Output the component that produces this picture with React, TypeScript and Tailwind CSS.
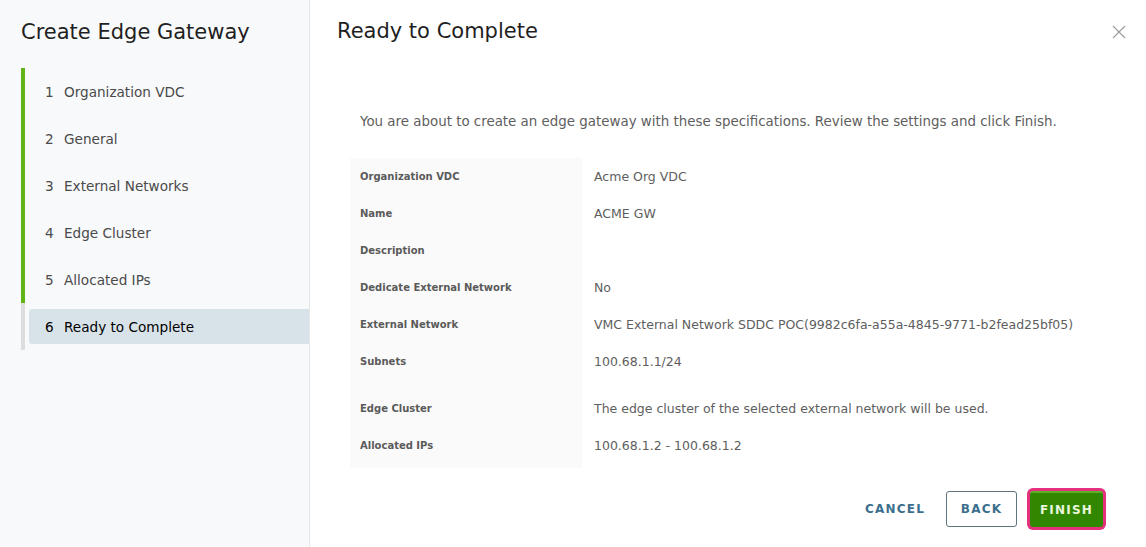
import React from "react";

const steps = [
  "Organization VDC",
  "General",
  "External Networks",
  "Edge Cluster",
  "Allocated IPs",
  "Ready to Complete",
];

const rows: { label: string; value: string; tall?: boolean }[] = [
  { label: "Organization VDC", value: "Acme Org VDC" },
  { label: "Name", value: "ACME GW" },
  { label: "Description", value: "" },
  { label: "Dedicate External Network", value: "No" },
  {
    label: "External Network",
    value: "VMC External Network SDDC POC(9982c6fa-a55a-4845-9771-b2fead25bf05)",
  },
  { label: "Subnets", value: "100.68.1.1/24", tall: true },
  { label: "Edge Cluster", value: "The edge cluster of the selected external network will be used." },
  { label: "Allocated IPs", value: "100.68.1.2 - 100.68.1.2" },
];

export default function App() {
  return (
    <div
      className="flex h-[547px] w-[1146px] overflow-hidden bg-white"
      style={{ fontFamily: '"DejaVu Sans", "Open Sans", sans-serif' }}
    >
      {/* Sidebar */}
      <div className="flex w-[310px] shrink-0 flex-col border-r border-[#e6e6e6] bg-[#f8f9fa]">
        <div className="pl-[21px] pt-[17px] text-[21px] leading-[30px] text-[#1f1f1f]">
          Create Edge Gateway
        </div>
        <div className="ml-[21px] mt-[21px] flex flex-col">
          {steps.map((s, i) => {
            const active = i === 5;
            return (
              <div
                key={s}
                className={`flex h-[47px] items-center border-l-4 ${
                  active ? "border-[#dddddd]" : "border-[#60b515]"
                }`}
              >
                {active ? (
                  <div className="ml-[4px] flex h-[35px] flex-1 items-center rounded-l-[3px] bg-[#d8e3e9] pl-[16px] pt-[1px] text-[13.6px] text-[#000]">
                    <span className="w-[19px]">6</span>
                    <span>{s}</span>
                  </div>
                ) : (
                  <div className="flex items-center pl-[20px] pt-[1px] text-[13.6px] text-[#4a4a4a]">
                    <span className="w-[19px]">{i + 1}</span>
                    <span>{s}</span>
                  </div>
                )}
              </div>
            );
          })}
        </div>
      </div>

      {/* Main */}
      <div className="flex flex-1 flex-col">
        <div className="flex items-start justify-between pl-[27px] pr-[20px] pt-[16px]">
          <div className="text-[21px] leading-[30px] text-[#1f1f1f]">Ready to Complete</div>
          <button className="mt-[9px] text-[#9a9a9a]" aria-label="close">
            <svg width="14" height="14" viewBox="0 0 14 14">
              <path d="M1 1 L13 13 M13 1 L1 13" stroke="currentColor" strokeWidth="1.1" fill="none" />
            </svg>
          </button>
        </div>

        <div className="pl-[50px] pt-[66px] text-[13.4px] leading-[20px] text-[#5e5e5e]">
          You are about to create an edge gateway with these specifications. Review the settings and click Finish.
        </div>

        <div className="ml-[40px] mt-[26px] flex">
          <div className="w-[232px] bg-[#fafafa] pb-[4px]">
            {rows.map((r) => (
              <div
                key={r.label}
                className={`flex items-start pl-[10px] text-[10px] font-bold text-[#5a5a5a] ${
                  r.tall ? "h-[47px]" : "h-[37px]"
                } pt-[10px] leading-[17px]`}
              >
                {r.label}
              </div>
            ))}
          </div>
          <div className="pl-[12px]">
            {rows.map((r) => (
              <div
                key={r.label}
                className={`flex items-start text-[12.5px] leading-[19px] text-[#5e5e5e] ${
                  r.tall ? "h-[47px]" : "h-[37px]"
                } pt-[9px]`}
              >
                {r.value}
              </div>
            ))}
          </div>
        </div>

        <div className="mt-auto flex items-center justify-end pb-[20px] pr-[43px]">
          <button className="mr-[21px] text-[12px] font-bold tracking-[0.1em] text-[#3c6f8e]">
            CANCEL
          </button>
          <button className="mr-[13px] h-[36px] w-[71px] rounded-[3px] border border-[#5f7481] bg-white text-[12px] font-bold tracking-[0.1em] text-[#3c6f8e]">
            BACK
          </button>
          <button className="h-[36px] w-[73px] rounded-[3px] border-t-2 border-[#5fae2a] bg-[#318700] text-[12px] font-bold tracking-[0.1em] text-[#eaf7dc] shadow-[0_0_0_3px_#e3317d]">
            FINISH
          </button>
        </div>
      </div>
    </div>
  );
}
